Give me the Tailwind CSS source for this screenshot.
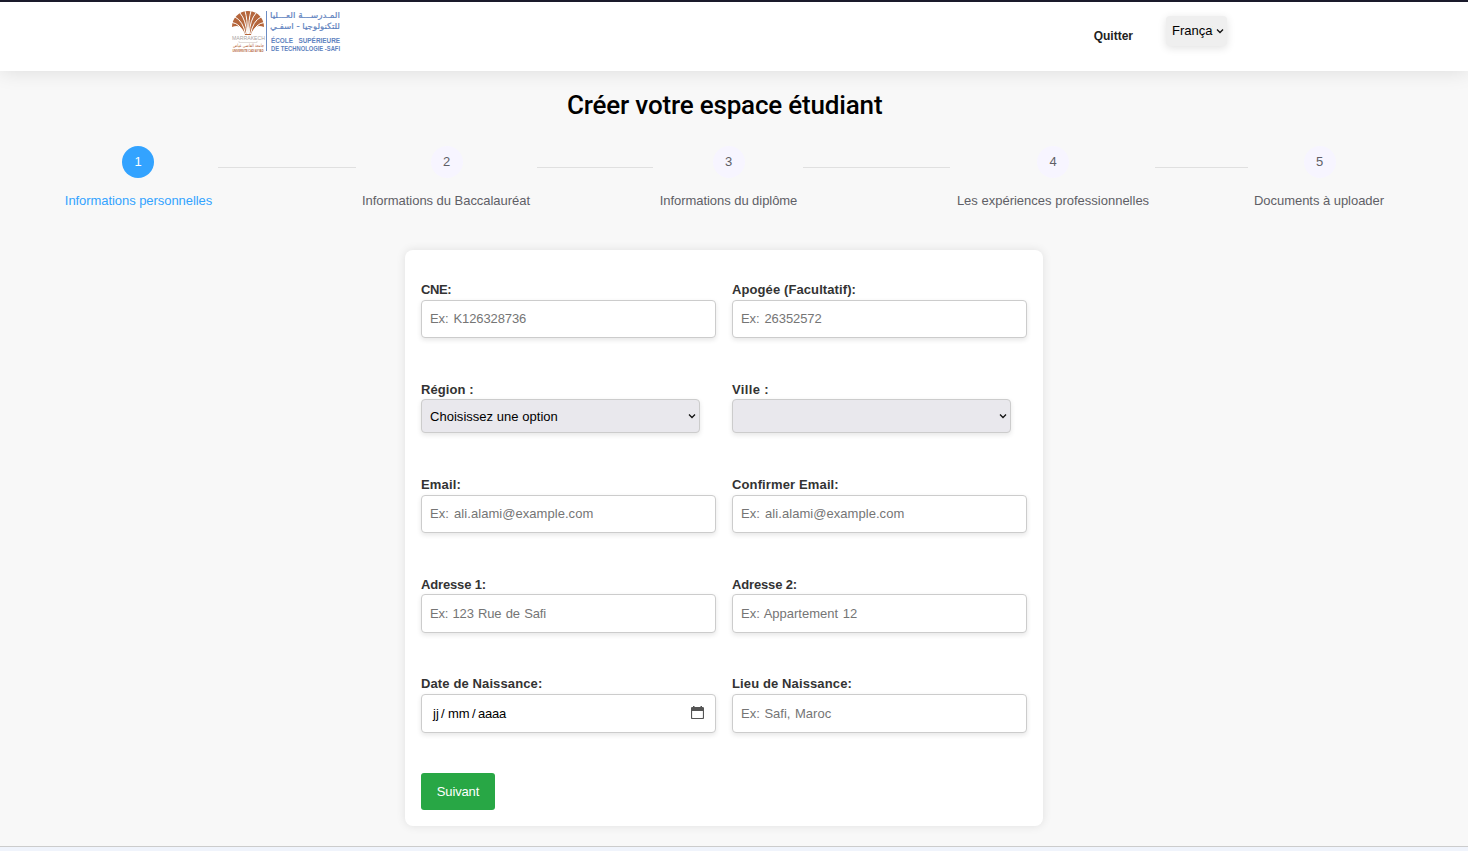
<!DOCTYPE html>
<html lang="fr">
<head>
<meta charset="utf-8">
<title>Créer votre espace étudiant</title>
<script src="https://cdn.jsdelivr.net/npm/@tailwindcss/browser@4"></script>
</head>
<body class="h-[851px] overflow-hidden bg-[#f8f8f8] font-['Liberation_Sans',Arial,sans-serif] text-[13px] flex flex-col">
<header class="relative h-[71px] shrink-0 bg-white border-t-2 border-[#1a1a2b] shadow-[0_0_20px_rgba(0,0,0,0.12)] pl-[231px] pr-[241px] flex justify-between items-start">
  <svg class="mt-2 w-[110px] h-[44px] overflow-visible" viewBox="0 0 110 44">
    <path d="M1 17C1 8 8 1 17 1s16 7 16 16q-5-2-8 0-4 3-5 8h-6q-1-5-5-8-3-2-8 0z" fill="#b5663c"/>
    <g stroke="#fff" stroke-width="1" fill="none">
      <path d="M1 12.500q8 1 12 11.500M4 7q8 4 10.500 17M9 3q6 7 6.800 21M14 1q2.500 8 2.500 23M20 1q-2.500 8-2.500 23M25 3q-6 7-6.800 21M30 7q-8 4-10.500 17M33 12.500q-8 1-12 11.500"/>
    </g>
    <text x="1" y="29.500" font-size="6" textLength="33" lengthAdjust="spacingAndGlyphs" fill="#aaa39f">MARRAKECH</text>
    <path d="M8 31v1.500h18V31" stroke="#d5cdc8" stroke-width=".7" fill="none"/>
    <text x="33" y="37" direction="rtl" font-family="DejaVu Sans" font-size="4.500" textLength="31" lengthAdjust="spacingAndGlyphs" fill="#b5663c">جامعة القاضي عياض</text>
    <text x="1.500" y="42" font-size="3.300" font-weight="700" textLength="31" lengthAdjust="spacingAndGlyphs" fill="#b5663c">UNIVERSITE CADI AYYAD</text>
    <path d="M35.500 1v40" stroke="#6b8cc4" stroke-width="1"/>
    <g fill="#5f83c0">
      <text x="109" y="8" direction="rtl" font-family="DejaVu Sans" font-size="8.500" stroke="#5f83c0" stroke-width=".2" textLength="70" lengthAdjust="spacingAndGlyphs">المـدرســـة العـــليا</text>
      <text x="109" y="18.500" direction="rtl" font-family="DejaVu Sans" font-size="8.500" stroke="#5f83c0" stroke-width=".2" textLength="70" lengthAdjust="spacingAndGlyphs">للتكنولوجيا - اسفـي</text>
      <text x="40" y="33" font-size="7" font-weight="700" textLength="22" lengthAdjust="spacingAndGlyphs">ÉCOLE</text>
      <text x="67.500" y="33" font-size="7" font-weight="700" textLength="41.500" lengthAdjust="spacingAndGlyphs">SUPÉRIEURE</text>
      <text x="40" y="41" font-size="6.500" font-weight="700" textLength="69" lengthAdjust="spacingAndGlyphs">DE TECHNOLOGIE -SAFI</text>
    </g>
  </svg>
  <nav class="flex items-start">
    <a class="mt-[26px] mr-[33px] leading-4 text-xs font-bold text-[#222]">Quitter</a>
    <div class="mt-3.5 w-[61px] h-[30px] rounded-sm bg-[#efefef] shadow-[0_2px_8px_rgba(0,0,0,0.12)] pl-1.5 pr-[3px] flex items-center justify-between text-black">
      <span class="w-[41px] overflow-hidden whitespace-nowrap">Français</span>
      <svg class="w-2 h-2" viewBox="0 0 8 8" fill="none" stroke="#111" stroke-width="1.300"><path d="M1 2.500l3 3 3-3"/></svg>
    </div>
  </nav>
</header>
<main class="h-[775px] shrink-0">
  <h1 class="mt-[17px] ml-[567px] h-[34px] leading-[34px] font-[Roboto] font-medium text-[26px] tracking-[-0.18px] text-black whitespace-nowrap">Créer votre espace étudiant</h1>
  <ol class="mt-6 ml-[65px] grid grid-cols-[297px_298px_297px_297px_auto] text-[#5f5f66] whitespace-nowrap">
    <li class="flex"><div class="w-[147px] flex flex-col items-center text-[#33a3ff]"><span class="mr-px size-8 rounded-full bg-[#33a3ff] text-white leading-[31px] text-center">1</span><span class="mt-[15px] leading-4 tracking-[-0.06px]">Informations personnelles</span></div><i class="flex-1 mx-1.5 mt-[21px] h-px bg-[#e0e0e0]"></i></li>
    <li class="flex"><div class="w-[169px] flex flex-col items-center"><span class="size-8 rounded-full bg-[#f7f5ff] leading-[31px] text-center">2</span><span class="mt-[15px] mr-px leading-4 tracking-[-0.04px]">Informations du Baccalauréat</span></div><i class="flex-1 ml-1.5 mr-[7px] mt-[21px] h-px bg-[#e0e0e0]"></i></li>
    <li class="flex"><div class="w-[137px] flex flex-col items-center"><span class="size-8 rounded-full bg-[#f7f5ff] leading-[31px] text-center">3</span><span class="mt-[15px] leading-4 tracking-[-0.05px]">Informations du diplôme</span></div><i class="flex-1 ml-1.5 mr-[7px] mt-[21px] h-px bg-[#e0e0e0]"></i></li>
    <li class="flex"><div class="w-[192px] flex flex-col items-center"><span class="size-8 rounded-full bg-[#f7f5ff] leading-[31px] text-center">4</span><span class="mt-[15px] leading-4">Les expériences professionnelles</span></div><i class="flex-1 mx-1.5 mt-[21px] h-px bg-[#e0e0e0]"></i></li>
    <li class="flex"><div class="w-[131px] flex flex-col items-center"><span class="size-8 rounded-full bg-[#f7f5ff] leading-[31px] text-center">5</span><span class="mt-[15px] mr-px leading-4 tracking-[-0.04px]">Documents à uploader</span></div></li>
  </ol>
  <form class="mt-[41px] ml-[405px] w-[638px] h-[576px] bg-white rounded-lg shadow-[0_0_10px_rgba(0,0,0,0.1)] px-4 pt-[30px]">
    <div class="grid grid-cols-[295px_295px] grid-rows-[99px_96px_99px_100px_99px] gap-x-4">
      <div><label class="block h-5 leading-[19px] font-bold tracking-[-0.4px] text-[#333]">CNE:</label><input class="block w-full h-[38px] px-2 pb-0.5 rounded border border-[#ccc] bg-white placeholder:text-[#757575] [word-spacing:1.5px] tracking-[-0.1px] shadow-[0_2px_5px_rgba(0,0,0,0.1)]" placeholder="Ex: K126328736"></div>
      <div><label class="block h-5 leading-[19px] font-bold tracking-[0.1px] text-[#333]">Apogée (Facultatif):</label><input class="block w-full h-[38px] px-2 pb-0.5 rounded border border-[#ccc] bg-white placeholder:text-[#757575] [word-spacing:1.5px] tracking-[-0.1px] shadow-[0_2px_5px_rgba(0,0,0,0.1)]" placeholder="Ex: 26352572"></div>
      <div><label class="block h-5 leading-[21px] font-bold tracking-[0.1px] text-[#333]">Région :</label><div class="w-[279px] h-[34px] pl-2 pr-[3px] rounded border border-[#ccc] bg-[#e9e8ed] text-black shadow-[0_2px_5px_rgba(0,0,0,0.1)] flex items-center justify-between"><span class="pt-0.5 tracking-[0.03px]">Choisissez une option</span><svg class="w-2 h-2" viewBox="0 0 8 8" fill="none" stroke="#111" stroke-width="1.300"><path d="M1 2.500l3 3 3-3"/></svg></div></div>
      <div><label class="block h-5 leading-[21px] font-bold tracking-[0.35px] text-[#333]">Ville :</label><div class="w-[279px] h-[34px] pl-2 pr-[3px] rounded border border-[#ccc] bg-[#e9e8ed] shadow-[0_2px_5px_rgba(0,0,0,0.1)] flex items-center justify-end"><svg class="w-2 h-2" viewBox="0 0 8 8" fill="none" stroke="#111" stroke-width="1.300"><path d="M1 2.500l3 3 3-3"/></svg></div></div>
      <div><label class="block h-5 leading-[19px] font-bold tracking-[0.15px] text-[#333]">Email:</label><input class="block w-full h-[38px] px-2 pb-0.5 rounded border border-[#ccc] bg-white placeholder:text-[#757575] [word-spacing:1.5px] tracking-[0.05px] shadow-[0_2px_5px_rgba(0,0,0,0.1)]" placeholder="Ex: ali.alami@example.com"></div>
      <div><label class="block h-5 leading-[19px] font-bold tracking-[0.13px] text-[#333]">Confirmer Email:</label><input class="block w-full h-[38px] px-2 pb-0.5 rounded border border-[#ccc] bg-white placeholder:text-[#757575] [word-spacing:1.5px] tracking-[0.05px] shadow-[0_2px_5px_rgba(0,0,0,0.1)]" placeholder="Ex: ali.alami@example.com"></div>
      <div><label class="block h-5 leading-[21px] font-bold tracking-[-0.15px] text-[#333]">Adresse 1:</label><input class="block w-full h-[39px] px-2 rounded border border-[#ccc] bg-white placeholder:text-[#757575] [word-spacing:1px] tracking-[-0.2px] shadow-[0_2px_5px_rgba(0,0,0,0.1)]" placeholder="Ex: 123 Rue de Safi"></div>
      <div><label class="block h-5 leading-[21px] font-bold tracking-[-0.15px] text-[#333]">Adresse 2:</label><input class="block w-full h-[39px] px-2 rounded border border-[#ccc] bg-white placeholder:text-[#757575] [word-spacing:1px] shadow-[0_2px_5px_rgba(0,0,0,0.1)]" placeholder="Ex: Appartement 12"></div>
      <div><label class="block h-5 leading-[19px] font-bold tracking-[0.12px] text-[#333]">Date de Naissance:</label><div class="flex items-center h-[39px] pl-[11px] pr-[11px] rounded border border-[#ccc] bg-white text-black shadow-[0_2px_5px_rgba(0,0,0,0.1)]"><span class="w-2">jj</span><span class="w-[7px]">/</span><span class="w-6">mm</span><span class="w-1.5">/</span><span class="flex-1 tracking-[-0.2px]">aaaa</span><svg class="w-[13px] h-[13px] -mt-0.5" viewBox="0 0 13 13"><path d="M1.500 1.500h10q1 0 1 1v9q0 1-1 1h-10q-1 0-1-1v-9q0-1 1-1z" fill="none" stroke="#555" stroke-width="1.200"/><path d="M0 2h13v3H0zM2 0h1.500v2H2zM9.500 0H11v2H9.500z" fill="#555"/></svg></div></div>
      <div><label class="block h-5 leading-[19px] font-bold tracking-[0.12px] text-[#333]">Lieu de Naissance:</label><input class="block w-full h-[39px] px-2 rounded border border-[#ccc] bg-white placeholder:text-[#757575] [word-spacing:1px] shadow-[0_2px_5px_rgba(0,0,0,0.1)]" placeholder="Ex: Safi, Maroc"></div>
    </div>
    <button type="button" class="block w-[74px] h-[37px] rounded-[3px] bg-[#28a745] text-white tracking-[-0.15px]">Suivant</button>
  </form>
</main>
<footer class="flex-1 border-t border-[#ccc] bg-[#f0f4fc]"></footer>
</body>
</html>
